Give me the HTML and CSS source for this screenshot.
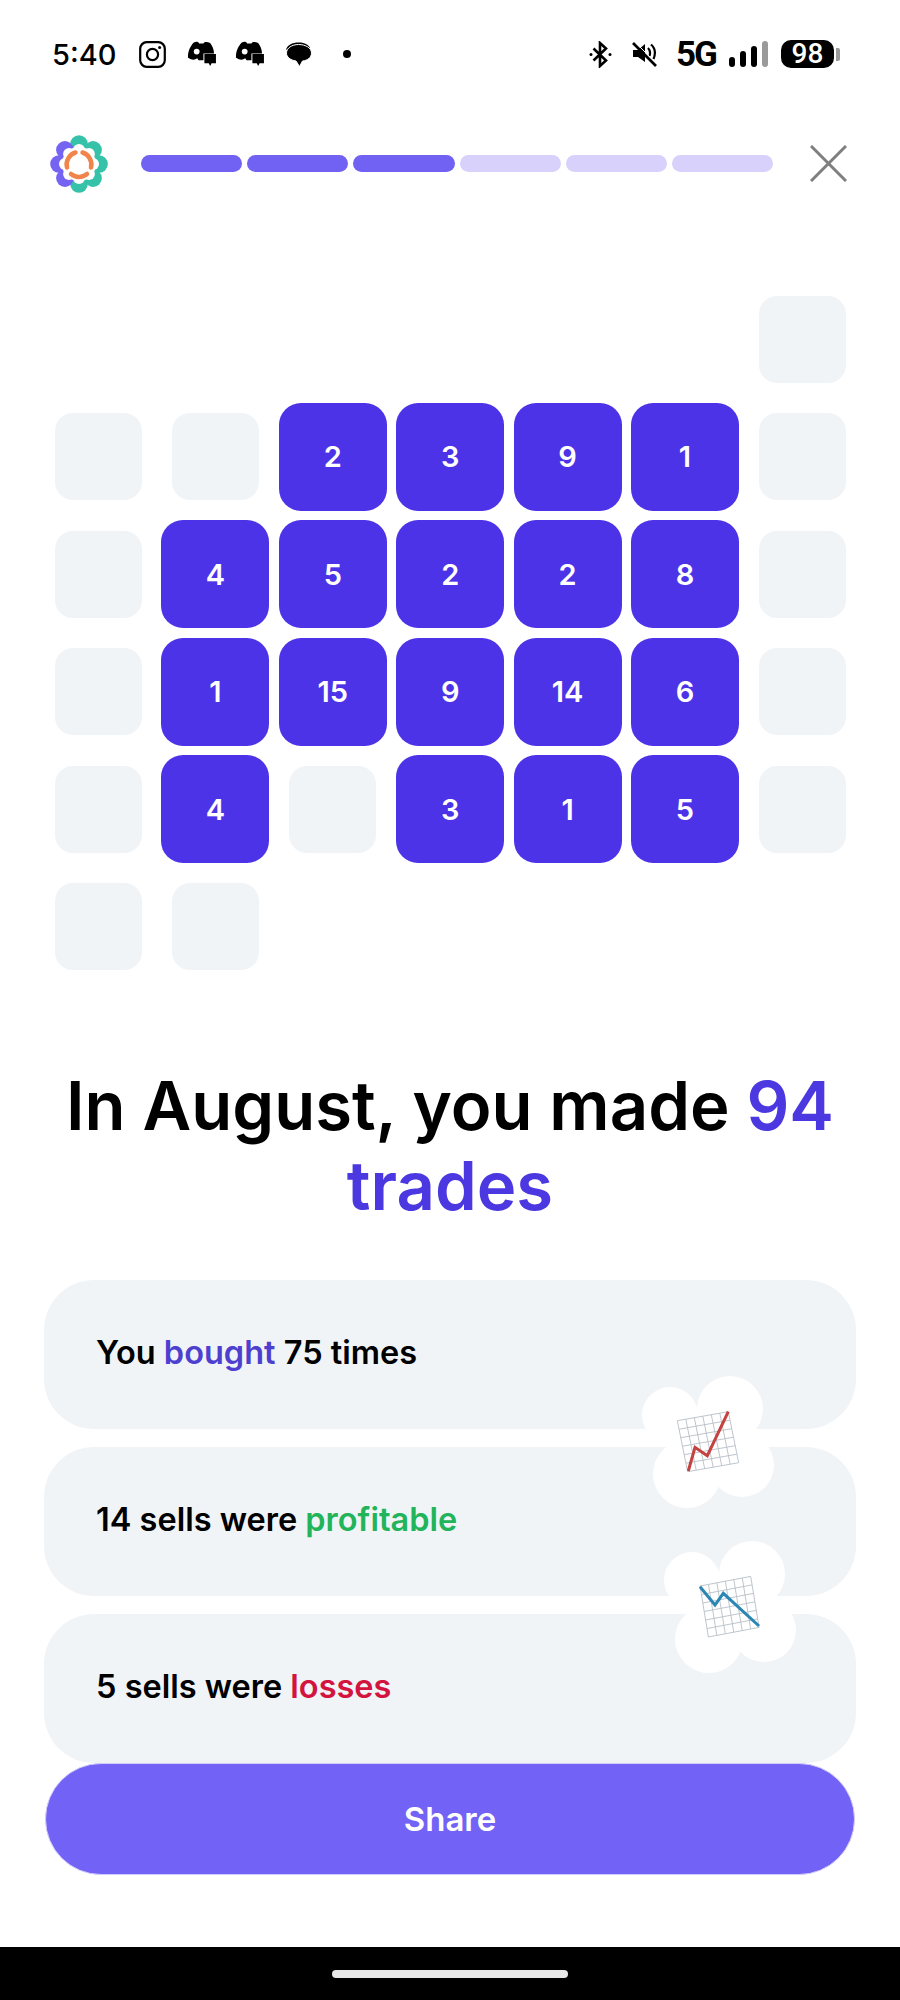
FILE: index.html
```html
<!DOCTYPE html>
<html lang="en">
<head>
    <meta charset="UTF-8">
    <title>August recap</title>

    <link rel="stylesheet" href="styles.css">
</head>
<body>
    <div class="page">
        <div class="status">
            <span class="time">5:40</span>
            <svg class="ic-insta" viewBox="0 0 27 27" fill="none" stroke="#000">
                <rect x="1.2" y="1.2" width="24.6" height="24.6" rx="6.5" stroke-width="2.2"/>
                <circle cx="13.5" cy="13.5" r="5.6" stroke-width="2.2"/>
                <circle cx="20.6" cy="6.4" r="1.5" fill="#000" stroke="none"/>
            </svg>
            <svg class="ic-chat" viewBox="0 0 30 27">
                <path d="M7 1.5C9.500 0.500 11.500 0.500 12.500 2.500H17C18 0.500 21 0.500 24 2C26.500 5.500 28 9 28 13H17V20H12L10.500 18C8 20 5 20 1 17.500C0.500 11 3.500 5 7 1.500Z"/>
                <circle cx="10" cy="11" r="3" fill="#fff"/>
                <path d="M18 13.500H30V23H25.500L24 26L22.500 23H18Z"/>
            </svg>
            <svg class="ic-chat second" viewBox="0 0 30 27">
                <path d="M7 1.5C9.500 0.500 11.500 0.500 12.500 2.500H17C18 0.500 21 0.500 24 2C26.500 5.500 28 9 28 13H17V20H12L10.500 18C8 20 5 20 1 17.500C0.500 11 3.500 5 7 1.500Z"/>
                <circle cx="10" cy="11" r="3" fill="#fff"/>
                <path d="M18 13.500H30V23H25.500L24 26L22.500 23H18Z"/>
            </svg>
            <svg class="ic-bubble" viewBox="0 0 27 25">
                <path d="M1 8C2 3 7 0.500 14 0.500C20 0.500 24 3 25 6L4 6Z"/>
                <path d="M13.500 2.500C20.500 2.500 26.500 5.800 26.500 11C26.500 15.500 22.500 18.500 17.500 19L14.500 24.500L11 19C5 18 1.500 15 1.500 11C1.500 6 7 2.500 13.500 2.500Z" stroke="#fff" stroke-width="1"/>
            </svg>
            <span class="dot"></span>

            <svg class="ic-bt" viewBox="0 0 23 27" fill="none" stroke="#000" stroke-width="2.600">
                <path d="M4.500 7.500L17 19.500L11 25V2L17 7.500L4.500 19.500"/>
                <circle cx="2" cy="13.500" r="1.500" fill="#000" stroke="none"/>
                <circle cx="21" cy="13.500" r="1.500" fill="#000" stroke="none"/>
            </svg>
            <svg class="ic-mute" viewBox="0 0 25 25" fill="none" stroke="#000">
                <path d="M1 8H6L13 2V20L6 15H1Z" fill="#000" stroke="none"/>
                <path d="M16 6C18 8 18.500 11 17.500 14M19 2.500C23 6 24 11 21.500 17" stroke-width="2.200"/>
                <path d="M1 1L24 24" stroke-width="2.600"/>
                <path d="M3 0L25 22" stroke="#fff" stroke-width="1"/>
            </svg>
            <span class="net">5G</span>
            <div class="signal">
                <i class="s1"></i><i class="s2"></i><i class="s3"></i><i class="s4"></i>
            </div>
            <div class="battery">98</div>
            <div class="nub"></div>
        </div>

        <div class="topbar">
            <svg class="logo" viewBox="-29 -29 58 58">
                <g fill="#35c2a9">
                    <circle cx="0" cy="-20" r="8.800"/>
                    <circle cx="14.100" cy="-14.100" r="8.800"/>
                    <circle cx="20" cy="0" r="8.800"/>
                    <circle cx="14.100" cy="14.100" r="8.800"/>
                    <circle cx="0" cy="20" r="8.800"/>
                </g>
                <g fill="#7563f2">
                    <circle cx="-14.100" cy="-14.100" r="8.800"/>
                    <circle cx="-20" cy="0" r="8.800"/>
                    <circle cx="-14.100" cy="14.100" r="8.800"/>
                </g>
                <g fill="#fff">
                    <circle r="17"/>
                    <circle cx="0" cy="-14" r="6"/>
                    <circle cx="9.900" cy="-9.900" r="6"/>
                    <circle cx="14" cy="0" r="6"/>
                    <circle cx="9.900" cy="9.900" r="6"/>
                    <circle cx="0" cy="14" r="6"/>
                    <circle cx="-9.900" cy="9.900" r="6"/>
                    <circle cx="-14" cy="0" r="6"/>
                    <circle cx="-9.900" cy="-9.900" r="6"/>
                </g>
                <g fill="none" stroke="#f0844a" stroke-width="4.500" stroke-linecap="round">
                    <path d="M-3.500 -11.500A12.500 12.500 0 0 0 -12 3.500"/>
                    <path d="M3.500 -11.500A12.500 12.500 0 0 1 12 3.500"/>
                    <path d="M-8 10A12.500 12.500 0 0 0 8 10"/>
                </g>
            </svg>
            <div class="progress">
                <div class="seg done"></div>
                <div class="seg done"></div>
                <div class="seg done"></div>
                <div class="seg"></div>
                <div class="seg"></div>
                <div class="seg"></div>
            </div>
            <svg class="close" viewBox="0 0 37 37" stroke="#7f7f7f" stroke-width="3">
                <path d="M1 1L36 36M36 1L1 36"/>
            </svg>
        </div>

        <div class="calendar">
            <div></div><div></div><div></div><div></div><div></div><div></div><div class="cell"></div>

            <div class="cell"></div><div class="cell"></div><div class="cell on">2</div><div class="cell on">3</div><div class="cell on">9</div><div class="cell on">1</div><div class="cell"></div>

            <div class="cell"></div><div class="cell on">4</div><div class="cell on">5</div><div class="cell on">2</div><div class="cell on">2</div><div class="cell on">8</div><div class="cell"></div>

            <div class="cell"></div><div class="cell on">1</div><div class="cell on">15</div><div class="cell on">9</div><div class="cell on">14</div><div class="cell on">6</div><div class="cell"></div>

            <div class="cell"></div><div class="cell on">4</div><div class="cell"></div><div class="cell on">3</div><div class="cell on">1</div><div class="cell on">5</div><div class="cell"></div>

            <div class="cell"></div><div class="cell"></div>
        </div>

        <h1 class="headline">In August, you made <span class="blue">94</span> <span class="blue">trades</span></h1>

        <div class="stats">
            <div class="stat"><span>You <span class="bought">bought</span> 75 times</span></div>
            <div class="stat"><span>14 sells were <span class="profit">profitable</span></span></div>
            <div class="stat"><span>5 sells were <span class="loss">losses</span></span></div>

            <svg class="cloud up" viewBox="0 0 136 136">
                <g fill="#fff">
                    <circle cx="30" cy="41" r="28"/>
                    <circle cx="90" cy="35" r="33"/>
                    <circle cx="102" cy="91" r="32"/>
                    <circle cx="47" cy="100" r="34"/>
                    <circle cx="68" cy="68" r="32"/>
                </g>
                <path transform="matrix(8.500 -1.500 1.730 8.500 37.300 46.700)" fill="none" stroke="#b9c1c8" stroke-width="0.100" d="M0 0H6M0 1H6M0 2H6M0 3H6M0 4H6M0 5H6M0 6H6M0 0V6M1 0V6M2 0V6M3 0V6M4 0V6M5 0V6M6 0V6"/>
                <path d="M48.300 97L55 73.300L67.300 81.700L88.300 37.700" fill="none" stroke="#c4423f" stroke-width="3"/>
            </svg>
            <svg class="cloud down" viewBox="0 0 136 136">
                <g fill="#fff">
                    <circle cx="30" cy="41" r="28"/>
                    <circle cx="90" cy="35" r="33"/>
                    <circle cx="102" cy="91" r="32"/>
                    <circle cx="47" cy="100" r="34"/>
                    <circle cx="68" cy="68" r="32"/>
                </g>
                <path transform="matrix(8.450 -1.600 1.400 8.500 38 47)" fill="none" stroke="#b9c1c8" stroke-width="0.100" d="M0 0H6M0 1H6M0 2H6M0 3H6M0 4H6M0 5H6M0 6H6M0 0V6M1 0V6M2 0V6M3 0V6M4 0V6M5 0V6M6 0V6"/>
                <path d="M38 47.700L53 66L61.300 54.300L97 87" fill="none" stroke="#2a86b4" stroke-width="3"/>
            </svg>
        </div>

        <button class="share">Share</button>

        <div class="navbar"><div class="handle"></div></div>
    </div>
</body>
</html>
```

FILE: styles.css
```css
html, body {
    margin: 0;
}

body {
    background: #fff;
    font-family: Inter, 'Noto Sans', sans-serif;
    color: #000;
}

.page {
    width: 900px;
    height: 2000px;
    display: flex;
    flex-direction: column;
    overflow: hidden;
}

/* status bar */
.status {
    height: 108px;
    padding-left: 52px;
    display: flex;
    align-items: center;
    flex-shrink: 0;
}

.time {
    font-size: 29px;
    font-weight: 500;
    width: 87px;
}

.ic-insta {
    width: 27px;
    height: 27px;
}

.ic-chat {
    width: 29px;
    height: 26px;
    margin-left: 21px;
}

.ic-chat.second {
    margin-left: 19px;
}

.ic-bubble {
    width: 27px;
    height: 25px;
    margin-left: 21px;
}

.dot {
    width: 8px;
    height: 8px;
    border-radius: 50%;
    background: #000;
    margin-left: 31px;
}

.ic-bt {
    width: 23px;
    height: 27px;
    margin-left: 238px;
}

.ic-mute {
    width: 25px;
    height: 25px;
    margin-left: 20px;
}

.net {
    font-family: Roboto, sans-serif;
    font-size: 35px;
    font-weight: 700;
    letter-spacing: -2px;
    width: 53px;
    margin-left: 19px;
}

.signal {
    display: flex;
    align-items: flex-end;
    gap: 5px;
    height: 26px;
}

.signal i {
    width: 6px;
    background: #000;
    border-radius: 3px;
}

.s1 { height: 10px; }
.s2 { height: 16px; }
.s3 { height: 21px; }
.s4 { height: 26px; background: #9a9a9a !important; }

.battery {
    width: 53px;
    height: 28px;
    margin-left: 13px;
    border-radius: 10px;
    background: #000;
    color: #fff;
    font-family: Roboto, sans-serif;
    font-size: 28px;
    font-weight: 500;
    line-height: 28px;
    text-align: center;
}

.nub {
    width: 4px;
    height: 13px;
    margin-left: 2px;
    background: #9a9a9a;
    border-radius: 0 2px 2px 0;
}

/* logo + progress */
.topbar {
    height: 111px;
    padding-left: 50px;
    display: flex;
    align-items: center;
    flex-shrink: 0;
}

.logo {
    width: 58px;
    height: 58px;
}

.progress {
    width: 632px;
    margin-left: 33px;
    display: flex;
    gap: 5px;
}

.seg {
    flex: 1;
    height: 17px;
    border-radius: 9px;
    background: #d8d1fb;
}

.seg.done {
    background: #7262f3;
}

.close {
    width: 37px;
    height: 37px;
    margin-left: 37px;
}

/* trades calendar */
.calendar {
    margin: 66px 0 0 44px;
    display: grid;
    grid-template-columns: repeat(7, 108px);
    grid-auto-rows: 108px;
    gap: 9.6px 9.4px;
    flex-shrink: 0;
}

.cell {
    margin: 10.5px;
    border-radius: 18px;
    background: #f1f4f7;
}

.cell.on {
    margin: 0;
    border-radius: 22px;
    background: #4c33e8;
    color: #fff;
    font-size: 29px;
    font-weight: 600;
    display: flex;
    align-items: center;
    justify-content: center;
}

.headline {
    margin: 85px 44px 0;
    font-size: 67px;
    font-weight: 600;
    line-height: 80px;
    text-align: center;
}

.blue {
    color: #4c38e0;
}

/* stats */
.stats {
    position: relative;
    margin-top: 54px;
    padding: 0 44px;
    display: flex;
    flex-direction: column;
    gap: 18px;
}

.stat {
    height: 149px;
    padding-left: 52px;
    border-radius: 50px;
    background: #f1f4f7;
    font-size: 32.5px;
    font-weight: 600;
    line-height: 146px;
}

.bought { color: #4e3fcf; }
.profit { color: #21b45b; }
.loss { color: #d3143f; }

.cloud {
    position: absolute;
    width: 136px;
    height: 136px;
}

.cloud.up {
    left: 640px;
    top: 94px;
}

.cloud.down {
    left: 662px;
    top: 259px;
}

.share {
    align-self: center;
    width: 810px;
    height: 112px;
    border: 1px solid #d3ccfb;
    border-radius: 56px;
    background: #7262f5;
    color: #fff;
    font-family: inherit;
    font-size: 33px;
    font-weight: 600;
    padding: 0;
    flex-shrink: 0;
}

.navbar {
    margin-top: 72px;
    height: 53px;
    background: #000;
    display: flex;
    justify-content: center;
    padding-top: 23px;
    box-sizing: border-box;
    flex-shrink: 0;
}

.handle {
    width: 236px;
    height: 8px;
    border-radius: 4px;
    background: #e8e8e8;
}
```
